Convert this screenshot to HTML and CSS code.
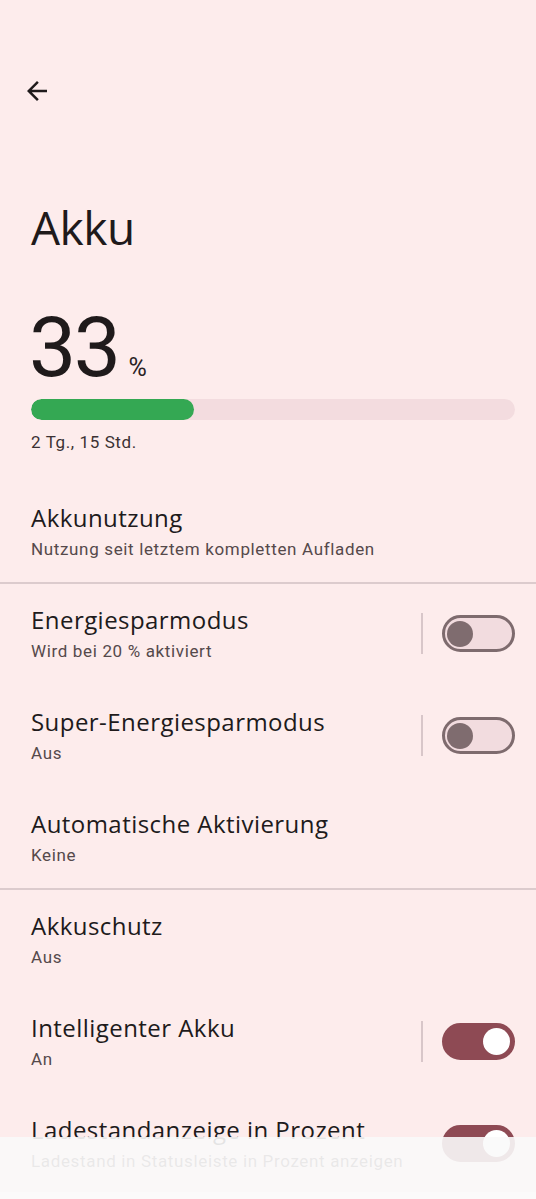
FILE: index.html
```html
<!DOCTYPE html>
<html lang="de">
<head>
<meta charset="utf-8">
<title>Akku</title>
<link rel="stylesheet" href="styles.css">
</head>
<body>
<div class="page">
  <div class="appbar">
    <svg class="back" viewBox="0 0 24 24" width="30" height="30"><path d="M20 11H7.83l5.59-5.59L12 4l-8 8 8 8 1.41-1.41L7.83 13H20v-2z" fill="#1f1a1b"/></svg>
  </div>
  <h1 class="title">Akku</h1>
  <div class="level"><span class="num">33</span><span class="pct">%</span></div>
  <div class="bar"><div class="fill" style="width:33.7%"></div></div>
  <div class="remain">2 Tg., 15 Std.</div>

  <div class="list">
    <div class="row">
      <div class="text"><div class="t">Akkunutzung</div><div class="s">Nutzung seit letztem kompletten Aufladen</div></div>
    </div>
    <div class="divider"></div>
    <div class="row">
      <div class="text"><div class="t">Energiesparmodus</div><div class="s">Wird bei 20 % aktiviert</div></div>
      <div class="sep"></div><div class="switch"><div class="thumb"></div></div>
    </div>
    <div class="row">
      <div class="text"><div class="t">Super-Energiesparmodus</div><div class="s">Aus</div></div>
      <div class="sep"></div><div class="switch"><div class="thumb"></div></div>
    </div>
    <div class="row">
      <div class="text"><div class="t">Automatische Aktivierung</div><div class="s">Keine</div></div>
    </div>
    <div class="divider"></div>
    <div class="row">
      <div class="text"><div class="t">Akkuschutz</div><div class="s">Aus</div></div>
    </div>
    <div class="row">
      <div class="text"><div class="t">Intelligenter Akku</div><div class="s">An</div></div>
      <div class="sep"></div><div class="switch on"><div class="thumb"></div></div>
    </div>
    <div class="row">
      <div class="text"><div class="t">Ladestandanzeige in Prozent</div><div class="s">Ladestand in Statusleiste in Prozent anzeigen</div></div>
      <div class="switch on"><div class="thumb"></div></div>
    </div>
  </div>
</div>
<div class="navbar"></div>
</body>
</html>
```
FILE: styles.css
```css
html, body {
  margin: 0;
  padding: 0;
  background: #fdecec;
}
body {
  font-family: Roboto, "Noto Sans", sans-serif;
  color: #1f1a1b;
  height: 1199px;
  overflow: hidden;
}
.page {
  padding-top: 76px;
}
.appbar {
  height: 30px;
  padding-left: 22px;
}
.back {
  display: block;
}
.title {
  margin: 93px 0 0;
  padding-left: 31px;
  font-family: "Open Sans", sans-serif;
  font-weight: 400;
  font-size: 46px;
  line-height: 56px;
  letter-spacing: -0.5px;
}
.level {
  margin-top: 51px;
  padding-left: 29px;
  display: flex;
  align-items: baseline;
  height: 84px;
}
.num {
  font-size: 84px;
  line-height: 84px;
  font-weight: 400;
  letter-spacing: -2.5px;
}
.pct {
  font-size: 25px;
  margin-left: 10px;
  color: #2a2224;
}
.bar {
  margin: 9px 21px 0 31px;
  height: 21px;
  border-radius: 11px;
  background: #f3dcdf;
  overflow: hidden;
}
.fill {
  height: 100%;
  background: #34a853;
  border-radius: 11px;
}
.remain {
  margin-top: 10px;
  padding-left: 31px;
  font-size: 17px;
  line-height: 24px;
  letter-spacing: 0.6px;
  color: #3b3133;
}
.list {
  margin-top: 27px;
}
.row {
  height: 102px;
  box-sizing: border-box;
  padding: 21px 21px 22px 31px;
  display: flex;
  align-items: center;
}
.text {
  flex: 1;
  min-width: 0;
  align-self: flex-start;
}
.t {
  font-family: "Open Sans", sans-serif;
  font-size: 24px;
  line-height: 32px;
  letter-spacing: 0.45px;
  color: #201a1b;
  white-space: nowrap;
}
.s {
  margin-top: 3px;
  font-size: 17px;
  line-height: 24px;
  letter-spacing: 0.65px;
  color: #55494b;
  white-space: nowrap;
}
.divider {
  height: 2px;
  margin-top: -1px;
  margin-bottom: -1px;
  background: #dccbcd;
}
.sep {
  width: 2px;
  height: 41px;
  background: #d8c6c9;
  margin-right: 19px;
}
.switch {
  width: 73px;
  height: 37px;
  box-sizing: border-box;
  border: 3px solid #7e6b6e;
  border-radius: 19px;
  background: #f2dcdf;
  display: flex;
  align-items: center;
  padding-left: 2px;
}
.thumb {
  width: 26px;
  height: 26px;
  border-radius: 50%;
  background: #7f6c6f;
}
.switch.on {
  background: #8e4a54;
  border-color: #8e4a54;
  justify-content: flex-end;
  padding: 0 2px 0 0;
}
.switch.on .thumb {
  width: 27px;
  height: 27px;
  background: #ffffff;
}
.navbar {
  position: fixed;
  left: 0;
  right: 0;
  bottom: 0;
  height: 62px;
  background: rgba(250, 249, 249, 0.9);
  border-bottom: 7px solid rgba(252, 251, 251, 0.9);
  box-sizing: border-box;
}
```
